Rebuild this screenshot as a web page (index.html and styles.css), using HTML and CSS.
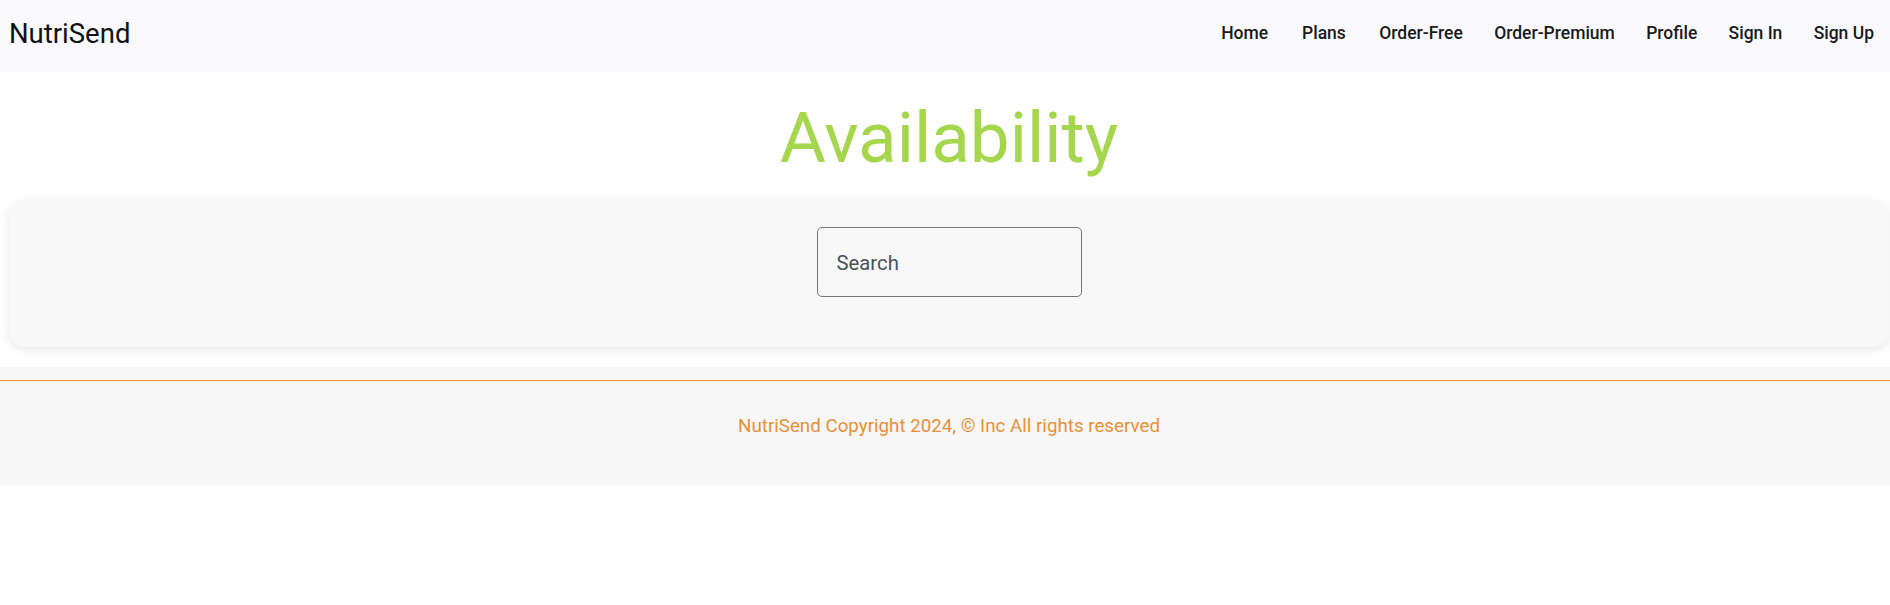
FILE: index.html
```html
<!DOCTYPE html>
<html lang="en">
<head>
<meta charset="utf-8">
<title>NutriSend - Availability</title>
<link rel="stylesheet" href="styles.css">
</head>
<body>
<header class="navbar">
  <div class="brand">NutriSend</div>
  <nav class="nav-links">
    <a class="nav-link" href="#">Home</a>
    <a class="nav-link" href="#">Plans</a>
    <a class="nav-link" href="#">Order-Free</a>
    <a class="nav-link" href="#">Order-Premium</a>
    <a class="nav-link" href="#">Profile</a>
    <a class="nav-link" href="#">Sign In</a>
    <a class="nav-link" href="#">Sign Up</a>
  </nav>
</header>
<main class="main">
  <h1 class="title">Availability</h1>
  <section class="card">
    <div class="search-box">
      <input class="search-input" type="text" placeholder="Search">
    </div>
  </section>
</main>
<footer class="footer">
  <hr class="footer-line">
  <p class="footer-text">NutriSend Copyright 2024, © Inc All rights reserved</p>
</footer>
</body>
</html>
```
FILE: styles.css
```css
* { box-sizing: border-box; }
html, body {
  margin: 0;
  padding: 0;
  background: #ffffff;
  font-family: Roboto, "Liberation Sans", Arial, sans-serif;
}
.navbar {
  height: 72px;
  background: #f9f9fe;
  display: flex;
  align-items: center;
  justify-content: space-between;
  padding: 0 8px 5px 9px;
}
.brand {
  font-size: 27.5px;
  line-height: 32px;
  color: #111111;
  font-weight: 400;
}
.nav-links {
  display: flex;
  align-items: center;
  gap: 15.3px;
}
.nav-link {
  min-width: 64px;
  padding: 6px 8px;
  text-align: center;
  font-size: 17.5px;
  line-height: 30.6px;
  font-weight: 500;
  color: #1a1a1a;
  text-decoration: none;
  white-space: nowrap;
}
.main {
  margin: 0 1px 0 9px;
  padding-bottom: 20px;
}
.title {
  margin: 24px 0 22px;
  text-align: center;
  font-size: 71px;
  line-height: 83px;
  font-weight: 400;
  color: #a6d64e;
}
.card {
  background: #f8f8f8;
  border-radius: 15px;
  box-shadow: 0 2px 10px rgba(0, 0, 0, 0.1);
  padding: 26px 0 50px;
  display: flex;
  justify-content: center;
}
.search-input {
  width: 265px;
  height: 70px;
  border: 1px solid #76767c;
  border-radius: 5px;
  background: transparent;
  padding: 2px 19px 0;
  font-family: Roboto, "Liberation Sans", Arial, sans-serif;
  font-size: 20.3px;
  color: #333;
  outline: none;
}
.search-input::placeholder {
  color: #4b505a;
  opacity: 1;
}
.footer {
  background: #f7f7f7;
  padding: 13px 0 45px;
}
.footer-line {
  margin: 0 0 30px;
  border: 0;
  border-top: 1px solid #e8912e;
  height: 0;
}
.footer-text {
  margin: 0;
  padding-left: 8px;
  text-align: center;
  font-size: 18.75px;
  line-height: 30px;
  color: #e6913a;
}
```
